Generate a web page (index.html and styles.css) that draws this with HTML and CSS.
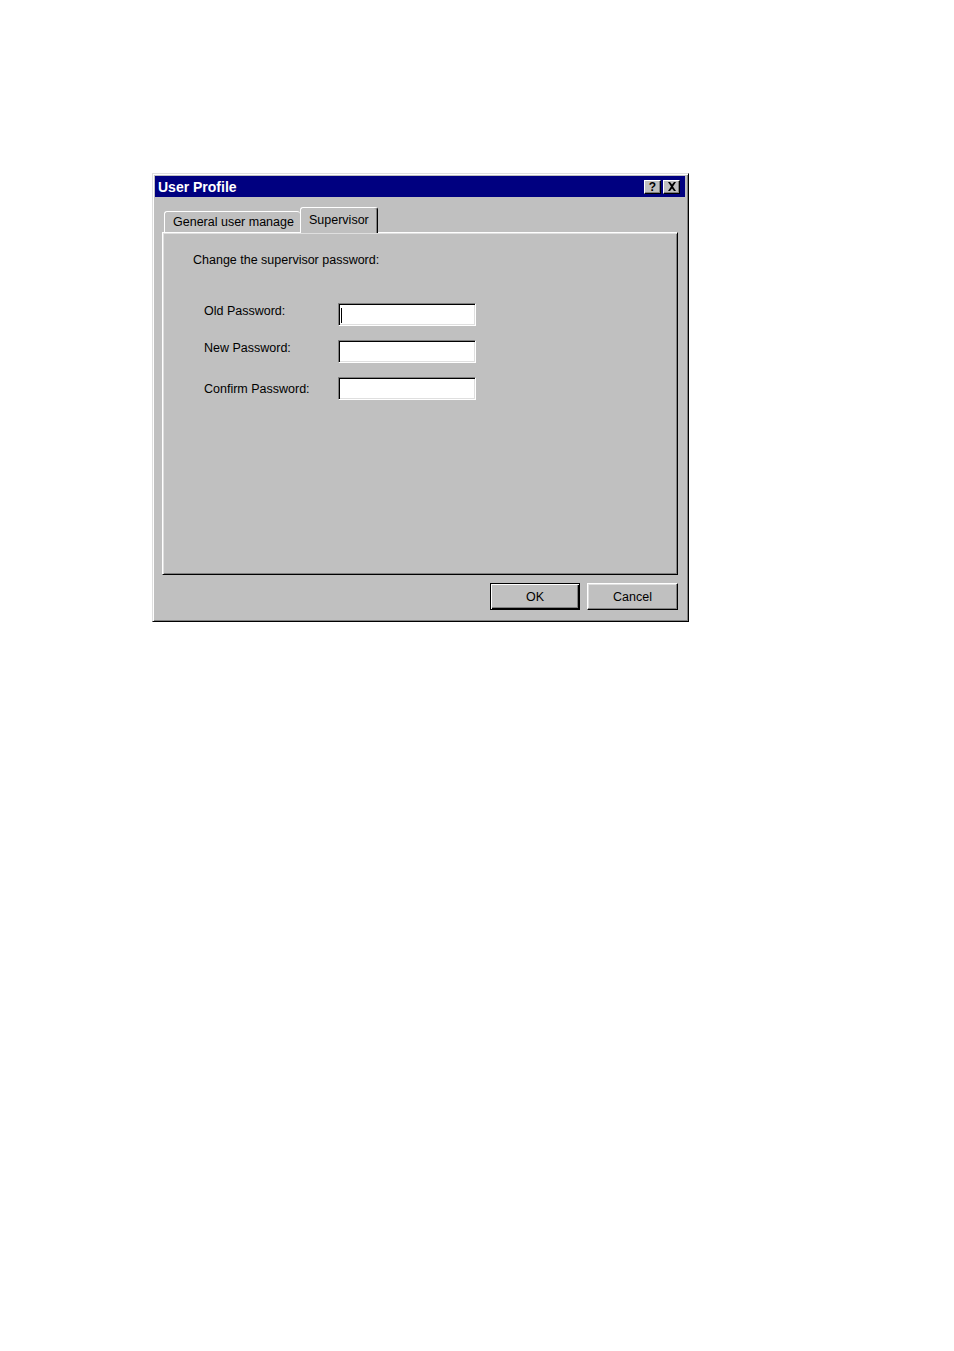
FILE: index.html
```html
<!DOCTYPE html>
<html>
<head>
<meta charset="utf-8">
<title>User Profile</title>
<link rel="stylesheet" href="styles.css">
</head>
<body>
<div class="window">
  <div class="titlebar">
    <span class="title">User Profile</span>
    <div class="title-buttons">
      <div class="tbtn help">?</div>
      <div class="tbtn close">
        <svg width="10" height="9" viewBox="0 0 10 9"><path d="M1 0h2l2 2.5L7 0h2L6 4.5 9 9H7L5 6.5 3 9H1l3-4.5z" fill="#000"/></svg>
      </div>
    </div>
  </div>
  <div class="tabs">
    <div class="tab inactive">General user manage</div>
    <div class="tab active">Supervisor</div>
  </div>
  <div class="panel">
    <div class="intro">Change the supervisor password:</div>
    <div class="form">
      <label class="lbl l1">Old Password:</label>
      <div class="field"><span class="caret"></span></div>
      <label class="lbl l2">New Password:</label>
      <div class="field"></div>
      <label class="lbl l3">Confirm Password:</label>
      <div class="field"></div>
    </div>
  </div>
  <div class="buttons">
    <div class="btn default"><span>OK</span></div>
    <div class="btn"><span>Cancel</span></div>
  </div>
</div>
</body>
</html>
```

FILE: styles.css
```css
html, body {
  margin: 0;
  padding: 0;
  background: #fff;
}
body {
  padding: 173px 0 0 152px;
  font-family: "Liberation Sans", Arial, sans-serif;
  font-size: 12.5px;
  color: #000;
}
.window {
  box-sizing: border-box;
  width: 537px;
  height: 449px;
  background: #c0c0c0;
  border: 1px solid;
  border-color: #dfdfdf #000 #000 #dfdfdf;
  box-shadow: inset 1px 1px #fff, inset -1px -1px #808080;
  padding: 2px 3px 0 2px;
  display: flex;
  flex-direction: column;
}
.titlebar {
  height: 21px;
  background: #000080;
  display: flex;
  align-items: center;
  justify-content: space-between;
  padding: 0 5px 0 3px;
}
.title {
  color: #fff;
  font-weight: bold;
  font-size: 14px;
  letter-spacing: 0;
}
.title-buttons {
  display: flex;
  gap: 2px;
}
.tbtn {
  box-sizing: border-box;
  width: 17px;
  height: 14px;
  background: #c0c0c0;
  border: 1px solid;
  border-color: #fff #000 #000 #fff;
  box-shadow: inset -1px -1px #808080;
  display: flex;
  align-items: center;
  justify-content: center;
  font-weight: bold;
  font-size: 12px;
  line-height: 1;
}
.tabs {
  margin: 10px 7px 0 7px;
  height: 25px;
  display: flex;
  align-items: flex-end;
  padding-left: 2px;
}
.tab {
  box-sizing: border-box;
  background: #c0c0c0;
  border: 1px solid;
  border-bottom: none;
  border-color: #fff #000 transparent #fff;
  border-radius: 3px 3px 0 0;
  box-shadow: inset -1px 0 #808080;
  white-space: nowrap;
}
.tab.inactive {
  width: 136px;
  height: 21px;
  padding: 3px 0 0 8px;
  border-right: none;
  box-shadow: none;
}
.tab.active {
  width: 78px;
  height: 26px;
  margin-bottom: -1px;
  padding: 5px 0 0 8px;
  position: relative;
  z-index: 1;
}
.panel {
  box-sizing: border-box;
  margin: 0 7px;
  height: 343px;
  border: 1px solid;
  border-color: #fff #000 #000 #fff;
  box-shadow: inset 1px 1px #dfdfdf, inset -1px -1px #808080;
  padding: 19px 0 0 30px;
}
.intro {
  line-height: 16px;
}
.form {
  margin-top: 35px;
  margin-left: 11px;
  display: grid;
  grid-template-columns: 134px 138px;
  grid-auto-rows: 23px;
  row-gap: 14px;
  align-items: center;
}
.lbl {
  line-height: 16px;
}
.l1 { align-self: start; }
.l2 { align-self: start; }
.l3 { align-self: center; }
.field {
  box-sizing: border-box;
  height: 23px;
  background: #fff;
  border: 1px solid;
  border-color: #808080 #fff #fff #808080;
  box-shadow: inset 1px 1px #000, inset -1px -1px #dfdfdf;
  padding: 4px 0 0 2px;
}
.caret {
  display: block;
  width: 1px;
  height: 15px;
  background: #000;
}
.buttons {
  display: flex;
  justify-content: flex-end;
  gap: 7px;
  margin: 8px 7px 0 0;
}
.btn {
  box-sizing: border-box;
  width: 91px;
  height: 27px;
  background: #c0c0c0;
  border: 1px solid;
  border-color: #fff #000 #000 #fff;
  box-shadow: inset -1px -1px #808080, inset 1px 1px #dfdfdf;
  display: flex;
  align-items: center;
  justify-content: center;
}
.btn.default {
  width: 90px;
  border: 1px solid #000;
  box-shadow: inset 1px 1px #fff, inset -1px -1px #000, inset -2px -2px #808080;
}
```
